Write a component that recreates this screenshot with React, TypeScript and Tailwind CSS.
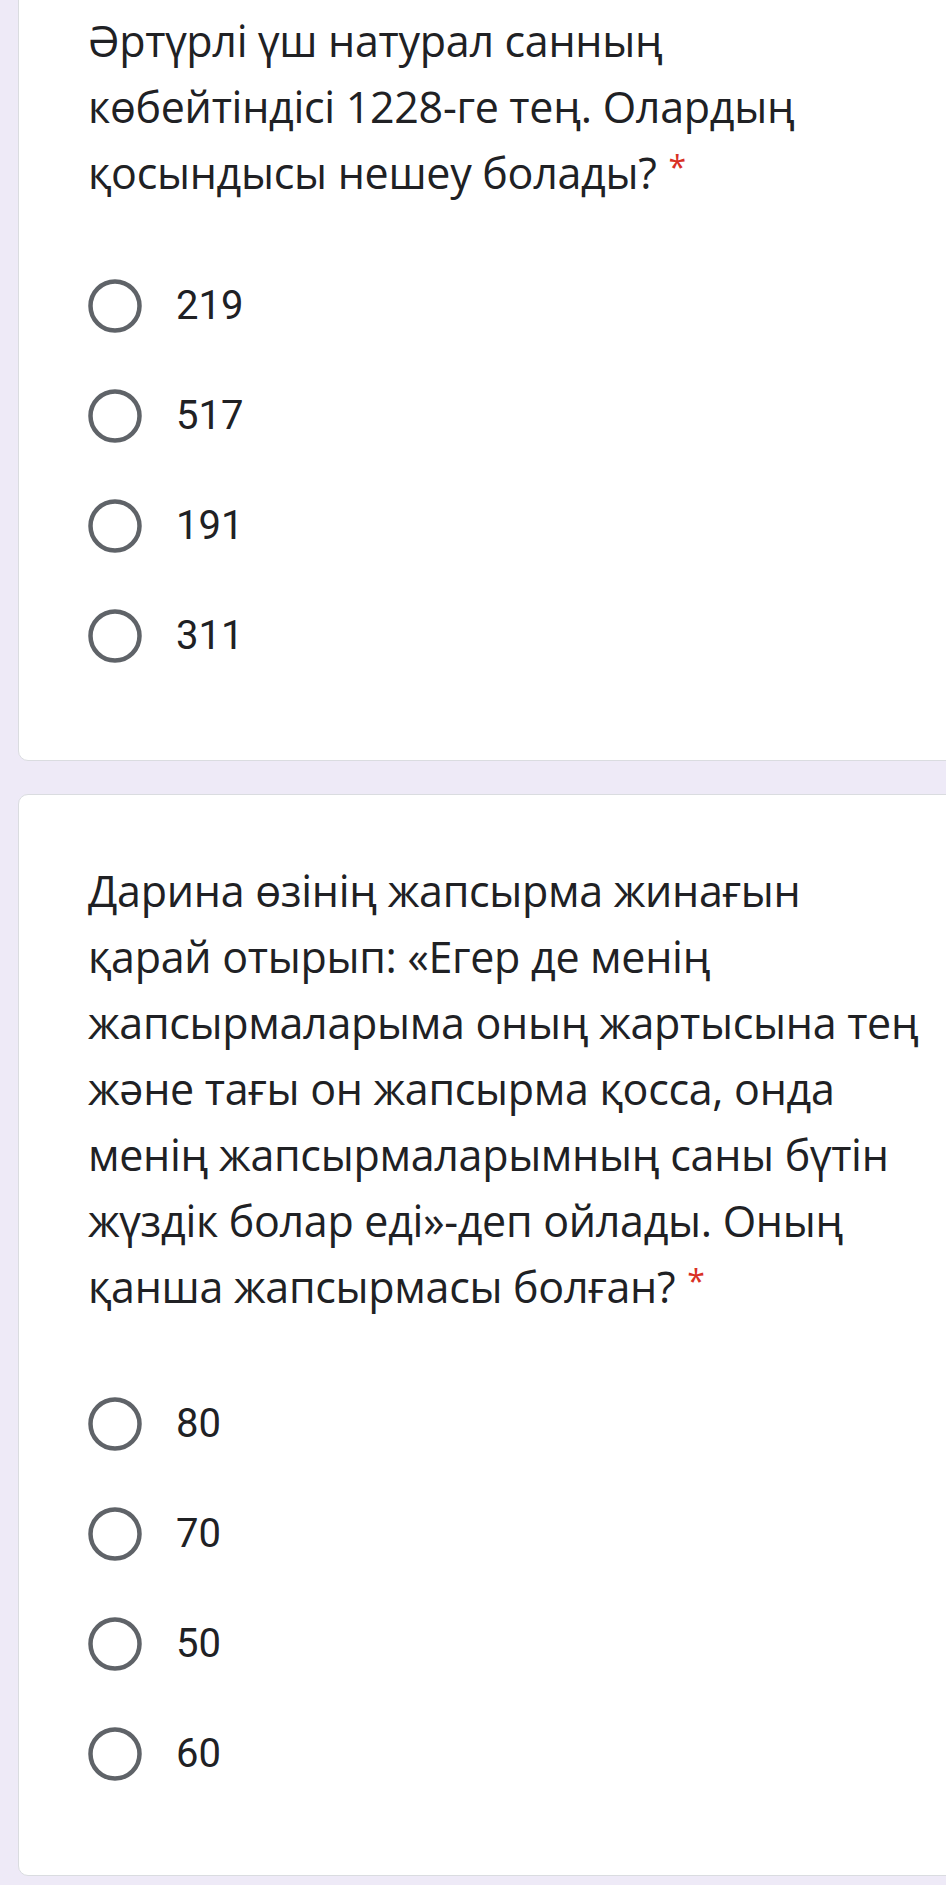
import React from "react";

const titleFont = { fontFamily: '"Open Sans", "Noto Sans", sans-serif' };
const optFont = { fontFamily: 'Roboto, "Noto Sans", sans-serif' };

function Radio() {
  return (
    <svg width="54" height="54" viewBox="0 0 54 54" className="shrink-0">
      <circle cx="27" cy="27" r="24.5" fill="none" stroke="#5f6368" strokeWidth="4.5" />
    </svg>
  );
}

function Option({ label }: { label: string }) {
  return (
    <div className="flex h-[110px] items-center">
      <Radio />
      <span className="ml-[34px] text-[40px] text-[#202124]" style={optFont}>
        {label}
      </span>
    </div>
  );
}

function Title({ lines }: { lines: string[] }) {
  return (
    <div className="text-[43px] leading-[66px] tracking-[-0.3px] text-[#202124]" style={titleFont}>
      {lines.map((l, i) => (
        <div key={i} className="h-[66px] whitespace-nowrap">
          {l}
          {i === lines.length - 1 && (
            <span className="relative -top-[10px] ml-[12px] text-[32px] leading-none text-[#d93025]">*</span>
          )}
        </div>
      ))}
    </div>
  );
}

export default function App() {
  return (
    <div className="min-h-[1885px] w-full overflow-hidden bg-[#eeeaf7] pl-[18px]">
      <div className="-mt-[20px] w-[1000px] rounded-[10px] border border-[#dadce0] bg-white pb-[69px] pl-[69px] pt-[27px]">
        <Title
          lines={[
            "Әртүрлі үш натурал санның",
            "көбейтіндісі 1228-ге тең. Олардың",
            "қосындысы нешеу болады?",
          ]}
        />
        <div className="mt-[45px]">
          {["219", "517", "191", "311"].map((o) => (
            <Option key={o} label={o} />
          ))}
        </div>
      </div>
      <div className="mt-[33px] w-[1000px] rounded-[10px] border border-[#dadce0] bg-white pb-[66px] pl-[69px] pt-[63px]">
        <Title
          lines={[
            "Дарина өзінің жапсырма жинағын",
            "қарай отырып: «Егер де менің",
            "жапсырмаларыма оның жартысына тең",
            "және тағы он жапсырма қосса, онда",
            "менің жапсырмаларымның саны бүтін",
            "жүздік болар еді»-деп ойлады. Оның",
            "қанша жапсырмасы болған?",
          ]}
        />
        <div className="mt-[49px]">
          {["80", "70", "50", "60"].map((o) => (
            <Option key={o} label={o} />
          ))}
        </div>
      </div>
    </div>
  );
}
